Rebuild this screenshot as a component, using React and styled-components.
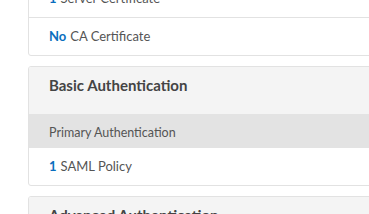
import React from "react";
import styled, { createGlobalStyle } from "styled-components";

const GlobalStyle = createGlobalStyle`
  html, body {
    margin: 0;
    padding: 0;
    background: #ffffff;
    overflow: hidden;
  }
  body {
    font-family: Lato, "Open Sans", "Liberation Sans", sans-serif;
    color: #555555;
  }
`;

const Page = styled.div`
  display: flex;
  flex-direction: column;
  gap: 10px;
  padding-left: 28px;
  margin-top: -21px;
  margin-right: -40px;
`;

const Card = styled.section`
  display: flex;
  flex-direction: column;
  border: 1px solid #e2e2e2;
  border-radius: 3px;
  overflow: hidden;
  background: #ffffff;
`;

const Header = styled.div`
  box-sizing: border-box;
  height: 47px;
  padding: 8px 20px 0;
  background: #f4f4f4;
  font-size: 15px;
  line-height: 20px;
  font-weight: 700;
  color: #444444;
`;

const SubHeader = styled.div`
  box-sizing: border-box;
  height: 34px;
  padding: 11px 20px 0;
  background: #e3e3e3;
  font-size: 12.5px;
  line-height: 16px;
  color: #555555;
`;

const Row = styled.div`
  box-sizing: border-box;
  height: 37px;
  display: flex;
  align-items: center;
  padding: 0 20px 1px;
  font-size: 13px;
  color: #555555;
  & + & {
    border-top: 1px solid #e2e2e2;
    height: 38px;
  }
`;

const Count = styled.span`
  color: #0a6ebd;
  font-weight: 700;
  margin-right: 4px;
`;

const Item = ({ count, label }) => (
  <Row>
    <Count>{count}</Count>
    {label}
  </Row>
);

export default function App() {
  return (
    <>
      <GlobalStyle />
      <Page>
        <Card>
          <Item count="1" label="Server Certificate" />
          <Item count="No" label="CA Certificate" />
        </Card>
        <Card>
          <Header>Basic Authentication</Header>
          <SubHeader>Primary Authentication</SubHeader>
          <Item count="1" label="SAML Policy" />
        </Card>
        <Card>
          <Header>Advanced Authentication</Header>
        </Card>
      </Page>
    </>
  );
}
